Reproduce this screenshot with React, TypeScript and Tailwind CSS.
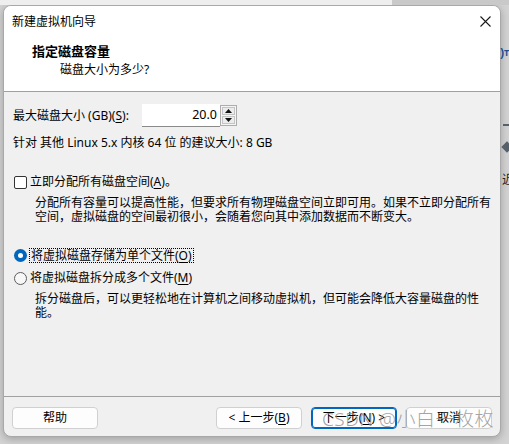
import React from "react";

const font = { fontFamily: '"Noto Sans", "Noto Sans CJK SC", sans-serif' };

// underlined access key
const Key = ({ k }: { k: string }) => <span className="underline underline-offset-2">{k}</span>;

const Btn = ({ children, primary }: { children: React.ReactNode; primary?: boolean }) => (
  <div
    className={
      "w-[86px] h-[22px] flex items-center justify-center rounded-[4px] bg-[#fdfdfd] text-[12px] text-black " +
      (primary ? "border border-[#0067c0] shadow-[inset_0_0_0_1px_#0067c0]" : "border border-[#d0d0d0]")
    }
  >
    {children}
  </div>
);

export default function App() {
  return (
    <div className="relative w-[509px] h-[444px] overflow-hidden bg-[#d3d3d3]" style={font}>
      {/* behind-window strip */}
      <div className="flex h-[5px]">
        <div className="w-[392px] bg-[#eeeeee]" />
        <div className="flex-1 bg-[#c9c9c9]" />
      </div>

      {/* stray bits of the window behind */}
      <span className="absolute left-[500px] top-[44px] text-[12px] font-bold text-[#1d4f91]">)</span>
      <span className="absolute left-[504px] top-[46px] text-[9px] font-bold text-[#1d4f91]">T</span>
      <div className="absolute left-[503px] top-[124px] w-[6px] h-[2px] bg-[#55606b]" />
      <div className="absolute left-[503px] top-[143px] w-[8px] h-[8px] rotate-45 bg-[#55606b]" />
      <div className="absolute left-[502px] top-[173px] w-[7px] overflow-hidden text-[12px] leading-[14px] text-[#222]">
        近
      </div>

      <div className="pl-[3px]">
        <div className="w-[498px] h-[432px] flex flex-col rounded-[8px] border border-[#a8a8a8] bg-[#f0f0f0] overflow-hidden shadow-[0_2px_8px_rgba(0,0,0,0.25)]">
          {/* title bar */}
          <div className="h-[31px] bg-white flex items-center justify-between pl-[8px] pr-[9px]">
            <span className="text-[12px] leading-[14px] text-black">新建虚拟机向导</span>
            <svg width="11" height="11" viewBox="0 0 11 11">
              <path d="M0.5 0.5 L10.5 10.5 M10.5 0.5 L0.5 10.5" stroke="#1a1a1a" strokeWidth="1.1" />
            </svg>
          </div>

          {/* header */}
          <div className="h-[55px] bg-white border-b border-[#a0a0a0] pt-[6px]">
            <div className="pl-[28px] text-[13px] leading-[16px] font-bold text-black">指定磁盘容量</div>
            <div className="pl-[56px] mt-[4px] text-[12px] leading-[14px] text-black">磁盘大小为多少?</div>
          </div>

          {/* body */}
          <div className="flex-1 pl-[9px] pt-[12px] text-[12px] leading-[14px] text-black whitespace-nowrap">
            <div className="flex items-center h-[23px]">
              <span className="w-[129px]">
                最大磁盘大小 (GB)(<Key k="S" />):
              </span>
              <div className="w-[78px] h-[23px] bg-white border-b border-[#8a8a8a] flex items-center justify-end pr-[3px] text-[12.5px]">
                20.0
              </div>
              <div className="w-[17px] h-[21px] border border-[#adadad] bg-[#f5f5f5] flex flex-col p-px gap-px">
                <div className="flex-1 border border-[#c4c4c4] bg-[#ececec] flex items-center justify-center">
                  <svg width="7" height="4" viewBox="0 0 7 4">
                    <path d="M3.5 0 L7 4 L0 4 Z" fill="#111" />
                  </svg>
                </div>
                <div className="flex-1 border border-[#c4c4c4] bg-[#ececec] flex items-center justify-center">
                  <svg width="7" height="4" viewBox="0 0 7 4">
                    <path d="M0 0 L7 0 L3.5 4 Z" fill="#111" />
                  </svg>
                </div>
              </div>
            </div>

            <div className="mt-[9px]">针对 其他 Linux 5.x 内核 64 位 的建议大小: 8 GB</div>

            <div className="mt-[25px] flex items-center">
              <div className="ml-[1px] w-[13px] h-[13px] rounded-[2px] border border-[#333] bg-white" />
              <span className="ml-[3px]">
                立即分配所有磁盘空间(<Key k="A" />)。
              </span>
            </div>
            <div className="mt-[7px] ml-[22px]">
              <div>分配所有容量可以提高性能，但要求所有物理磁盘空间立即可用。如果不立即分配所有</div>
              <div>空间，虚拟磁盘的空间最初很小，会随着您向其中添加数据而不断变大。</div>
            </div>

            <div className="mt-[23px] flex items-center h-[16px]">
              <div className="ml-[1px] w-[13px] h-[13px] rounded-full bg-[#0067c0] flex items-center justify-center">
                <div className="w-[5px] h-[5px] rounded-full bg-white" />
              </div>
              <span className="ml-[2px] px-px border border-dotted border-black leading-[13px]">
                将虚拟磁盘存储为单个文件(<Key k="O" />)
              </span>
            </div>
            <div className="mt-[7px] flex items-center h-[16px]">
              <div className="ml-[1px] w-[13px] h-[13px] rounded-full border border-[#5d5d5d] bg-[#f7f7f7]" />
              <span className="ml-[3px]">
                将虚拟磁盘拆分成多个文件(<Key k="M" />)
              </span>
            </div>
            <div className="mt-[6px] ml-[22px]">
              <div>拆分磁盘后，可以更轻松地在计算机之间移动虚拟机，但可能会降低大容量磁盘的性</div>
              <div>能。</div>
            </div>
          </div>

          {/* footer */}
          <div className="relative h-[40px] border-t border-[#a0a0a0] flex items-start pt-[10px] pl-[8px] pr-[8px]">
            <Btn>帮助</Btn>
            <div className="ml-auto flex gap-[9px]">
              <Btn>
                &lt; 上一步(<Key k="B" />)
              </Btn>
              <Btn primary>
                下一步(<Key k="N" />) &gt;
              </Btn>
              <Btn>取消</Btn>
            </div>
            {/* watermark */}
            <span className="absolute left-[318px] top-[11px] text-[19px] leading-[22px] tracking-[0.5px] font-light text-[#8c8c8c]/80 whitespace-nowrap">
              CSDN @小白一枚枚
            </span>
          </div>
        </div>
      </div>
    </div>
  );
}
